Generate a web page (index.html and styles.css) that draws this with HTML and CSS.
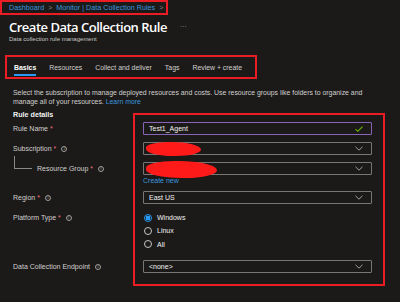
FILE: index.html
```html
<!DOCTYPE html>
<html>
<head>
<meta charset="utf-8">
<link rel="stylesheet" href="styles.css">
</head>
<body>
<div class="page">
  <nav class="crumbs">
    <a class="crumb">Dashboard</a><span class="sep">&gt;</span><a class="crumb">Monitor | Data Collection Rules</a><span class="sep">&gt;</span>
  </nav>
  <div class="titlerow">
    <h1 class="title">Create Data Collection Rule</h1>
    <span class="more">···</span>
  </div>
  <div class="subtitle">Data collection rule management</div>

  <div class="tabs">
    <span class="tab active">Basics</span>
    <span class="tab">Resources</span>
    <span class="tab">Collect and deliver</span>
    <span class="tab">Tags</span>
    <span class="tab">Review + create</span>
  </div>

  <p class="desc">Select the subscription to manage deployed resources and costs. Use resource groups like folders to organize and manage all of your resources. <a class="link">Learn more</a></p>

  <div class="form">
    <div class="redbox"></div>
    <div class="heading">Rule details</div>

    <div class="label r-name">Rule Name <span class="req">*</span></div>
    <div class="field r-name valid"><span class="val">Test1_Agent</span>
      <svg class="icon" width="8" height="6" viewBox="0 0 8 6"><path d="M0.5 3.2 L2.8 5.3 L7.5 0.6" fill="none" stroke="#6bb700" stroke-width="1.1"/></svg>
    </div>

    <div class="label r-sub">Subscription <span class="req">*</span> <span class="info">i</span></div>
    <div class="field r-sub"><span class="scribble s1"></span>
      <svg class="icon" width="8" height="5" viewBox="0 0 8 5"><path d="M0.5 0.8 L4 4.2 L7.5 0.8" fill="none" stroke="#a19f9d" stroke-width="1"/></svg>
    </div>

    <div class="label r-rg"><span class="tree"></span>Resource Group <span class="req">*</span> <span class="info">i</span></div>
    <div class="field r-rg"><span class="scribble s2"></span>
      <svg class="icon" width="8" height="5" viewBox="0 0 8 5"><path d="M0.5 0.8 L4 4.2 L7.5 0.8" fill="none" stroke="#a19f9d" stroke-width="1"/></svg>
    </div>
    <a class="createnew link">Create new</a>

    <div class="label r-region">Region <span class="req">*</span> <span class="info">i</span></div>
    <div class="field r-region"><span class="val">East US</span>
      <svg class="icon" width="8" height="5" viewBox="0 0 8 5"><path d="M0.5 0.8 L4 4.2 L7.5 0.8" fill="none" stroke="#a19f9d" stroke-width="1"/></svg>
    </div>

    <div class="label r-plat">Platform Type <span class="req">*</span> <span class="info">i</span></div>
    <div class="radios r-plat">
      <div class="radio checked"><span class="dot"></span>Windows</div>
      <div class="radio"><span class="dot"></span>Linux</div>
      <div class="radio"><span class="dot"></span>All</div>
    </div>

    <div class="label r-dce">Data Collection Endpoint <span class="info">i</span></div>
    <div class="field r-dce"><span class="val">&lt;none&gt;</span>
      <svg class="icon" width="8" height="5" viewBox="0 0 8 5"><path d="M0.5 0.8 L4 4.2 L7.5 0.8" fill="none" stroke="#a19f9d" stroke-width="1"/></svg>
    </div>
  </div>
</div>
</body>
</html>
```
FILE: styles.css
```css
* { box-sizing: border-box; }
html, body {
  margin: 0;
  padding: 0;
  background: #1b1a19;
  width: 400px;
  height: 302px;
  overflow: hidden;
}
.page {
  font-family: "Liberation Sans", "DejaVu Sans", sans-serif;
  color: #d2d0ce;
  font-size: 7px;
}
.crumbs {
  display: flex;
  align-items: center;
  gap: 4px;
  width: 168px;
  height: 15px;
  padding-left: 7px;
  border: 2px solid #ec1c24;
  font-size: 7.2px;
  white-space: nowrap;
}
.crumb { color: #3a96dd; }
.sep { color: #8a8886; font-size: 7px; }
.titlerow {
  display: flex;
  align-items: center;
  gap: 13px;
  padding-left: 9px;
  margin-top: 4px;
  height: 15px;
}
.title {
  margin: 0;
  font-size: 13px;
  font-weight: 600;
  color: #ffffff;
  font-family: "Open Sans", "Liberation Sans", sans-serif;
  letter-spacing: -0.5px;
  white-space: nowrap;
}
.more { color: #a19f9d; font-size: 7px; }
.subtitle {
  padding-left: 9px;
  margin-top: 2px;
  font-size: 6px;
  color: #c8c6c4;
}
.tabs {
  display: flex;
  align-items: center;
  gap: 13px;
  margin: 13px 0 0 5px;
  width: 252px;
  height: 24px;
  padding-left: 7px;
  border: 2px solid #ec1c24;
  font-size: 6.9px;
  color: #d2d0ce;
  white-space: nowrap;
}
.tab { position: relative; }
.tab.active { font-weight: 700; color: #ffffff; }
.tab.active::after {
  content: "";
  position: absolute;
  left: 0;
  right: 0;
  bottom: -5px;
  height: 2px;
  background: #2899f5;
}
.desc {
  margin: 9px 0 0 13px;
  width: 376px;
  font-size: 6.9px;
  line-height: 9px;
  color: #d2d0ce;
}
.link { color: #3a96dd; }
.form {
  display: grid;
  margin-top: 3px;
  margin-left: 13px;
  grid-template-columns: 120px 252px;
  grid-template-rows: 13px 13px 7px 13px 7px 13px 10px 6px 13px 7px 40px 9px 13px 13px;
}
.redbox {
  grid-column: 2;
  grid-row: 1 / -1;
  margin-top: 4px;
  border: 2.5px solid #ec1c24;
}
.heading {
  grid-column: 1;
  grid-row: 1;
  font-weight: 700;
  color: #f3f2f1;
  font-size: 7.2px;
  line-height: 12px;
}
.label {
  grid-column: 1;
  display: flex;
  align-items: center;
  gap: 3px;
  color: #d2d0ce;
  font-size: 7px;
  white-space: nowrap;
}
.req { color: #f1707b; margin-left: -1px; }
.info {
  display: inline-flex;
  align-items: center;
  justify-content: center;
  width: 6px;
  height: 6px;
  border: 0.8px solid #a19f9d;
  border-radius: 50%;
  font-size: 4.5px;
  color: #a19f9d;
  margin-left: 2px;
}
.field {
  grid-column: 2;
  margin: 0 13px 0 10px;
  border: 1px solid #797775;
  border-radius: 1px;
  display: flex;
  align-items: center;
  justify-content: space-between;
  padding: 0 8px 0 5px;
  position: relative;
  color: #f3f2f1;
  font-size: 7px;
}
.field.valid { border-color: #8764b8; }
.icon { flex: none; margin-left: auto; }
.r-name { grid-row: 2; }
.r-sub { grid-row: 4; }
.r-rg { grid-row: 6; }
.createnew { grid-column: 2; grid-row: 7; margin-left: 10px; align-self: center; font-size: 7px; }
.r-region { grid-row: 9; }
.r-plat { grid-row: 11; }
.r-dce { grid-row: 13; }
.label.r-plat { align-self: start; height: 13px; }
.tree {
  align-self: flex-start;
  margin-top: -6px;
  width: 18px;
  height: 13px;
  border-left: 1px solid #8a8886;
  border-bottom: 1px solid #8a8886;
  margin-left: 1px;
  margin-right: 2px;
}
.scribble {
  position: absolute;
  left: 2px;
  background: #ff1a1a;
  border-radius: 40% 55% 45% 50%;
  filter: blur(0.6px);
}
.s1 { top: -1px; width: 55px; height: 14px; }
.s2 { top: -2px; width: 71px; height: 17px; }
.radios {
  grid-column: 2;
  margin-left: 10px;
  display: flex;
  flex-direction: column;
}
.radio {
  height: 13.3px;
  display: flex;
  align-items: center;
  gap: 4px;
  padding-left: 1px;
  color: #f3f2f1;
  font-size: 7px;
}
.dot {
  width: 8px;
  height: 8px;
  border-radius: 50%;
  border: 1px solid #c8c6c4;
  flex: none;
  margin-right: 1px;
}
.radio.checked .dot {
  border-color: #2899f5;
  background: radial-gradient(circle, #2899f5 0 2.2px, transparent 2.6px);
}
```
